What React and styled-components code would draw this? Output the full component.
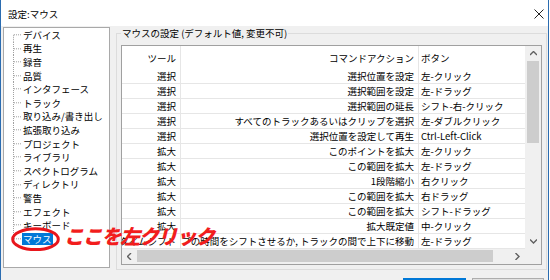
import React from 'react'
import styled, { createGlobalStyle } from 'styled-components'

const UI_FONT = `"Noto Sans CJK JP", "Noto Sans", sans-serif`

const GlobalStyle = createGlobalStyle`
  html, body {
    margin: 0;
    padding: 0;
    background: #fff;
  }
  body {
    font-family: ${UI_FONT};
  }
`

const Window = styled.div`
  position: relative;
  width: 549px;
  height: 280px;
  box-sizing: border-box;
  border-left: 1px solid #2b6cb0;
  border-right: 1px solid #2b6cb0;
  background: #f0f0f0;
  display: flex;
  flex-direction: column;
  overflow: hidden;
  font-family: ${UI_FONT};
  font-size: 9.5px;
  color: #000;
`

const TitleBar = styled.div`
  flex: none;
  height: 26px;
  box-sizing: border-box;
  padding: 2px 4px 0 7px;
  background: #fff;
  display: flex;
  align-items: center;
  justify-content: space-between;
`

const Content = styled.div`
  flex: none;
  height: 243px;
  box-sizing: border-box;
  padding: 1px 0 0 2px;
  display: flex;
  align-items: flex-start;
  gap: 6px;
`

const Tree = styled.ul`
  margin: 0;
  width: 107px;
  height: 241px;
  box-sizing: border-box;
  padding: 0 0 0 9px;
  list-style: none;
  background: #fff;
  border: 1px solid #a9a9a9;
`

const TreeItem = styled.li`
  height: 13.6px;
  display: flex;
  align-items: center;
`

const TreeLabel = styled.span`
  padding: 0 1px;
  line-height: 12px;
  white-space: nowrap;
  background: ${p => (p.$selected ? '#0078d7' : 'transparent')};
  color: ${p => (p.$selected ? '#fff' : '#000')};
`

const GuideSvg = styled.svg`
  flex: none;
  display: block;
`

const Group = styled.fieldset`
  margin: 0;
  min-width: 0;
  width: 431px;
  height: 243px;
  box-sizing: border-box;
  padding: 6px 4px 4px 4px;
  border: 1px solid #dcdcdc;
`

const Legend = styled.legend`
  margin: 0;
  padding: 0 1px;
  line-height: 12px;
  white-space: nowrap;
`

const Table = styled.div`
  width: 421px;
  height: 220px;
  box-sizing: border-box;
  border: 1px solid #a0a0a0;
  background: #fff;
  display: grid;
  grid-template-columns: 403px 16px;
  grid-template-rows: 203px 15px;
`

const Rows = styled.div`
  overflow: hidden;
`

const Row = styled.div`
  display: grid;
  grid-template-columns: 59px 238px 106px;
  height: ${p => (p.$header ? 23 : 15)}px;
  box-sizing: border-box;
  border-bottom: ${p => (p.$header ? 'none' : '1px solid #e6e6e6')};
`

const Cell = styled.div`
  display: flex;
  align-items: center;
  justify-content: ${p => (p.$align === 'left' ? 'flex-start' : 'flex-end')};
  padding: ${p => (p.$align === 'left' ? '0 0 0 2px' : '0 4px 0 0')};
  overflow: hidden;
  white-space: nowrap;
  border-right: ${p => (p.$divider ? '1px solid #e6e6e6' : 'none')};
  line-height: 14px;
`

const CellText = styled.span`
  flex: none;
`

const VScroll = styled.div`
  display: flex;
  flex-direction: column;
  background: #f0f0f0;
`

const HScroll = styled.div`
  display: flex;
  background: #f0f0f0;
`

const ArrowBox = styled.div`
  flex: none;
  width: ${p => (p.$vertical ? 'auto' : '15px')};
  height: ${p => (p.$vertical ? '15px' : 'auto')};
  display: flex;
  align-items: center;
  justify-content: center;
`

const Track = styled.div`
  flex: 1;
  display: flex;
  flex-direction: ${p => (p.$vertical ? 'column' : 'row')};
`

const Thumb = styled.div`
  flex: none;
  background: #cdcdcd;
  width: ${p => (p.$vertical ? '12px' : `${p.$size}px`)};
  height: ${p => (p.$vertical ? `${p.$size}px` : '12px')};
  margin: ${p => (p.$vertical ? '0 0 0 2px' : '1px 0 0 0')};
`

const Corner = styled.div`
  background: #f0f0f0;
`

const Footer = styled.div`
  display: flex;
  justify-content: flex-end;
  gap: 6px;
  padding: 9px 4px 0 0;
`

const Button = styled.button`
  width: ${p => p.$w}px;
  height: 22px;
  box-sizing: border-box;
  font-family: ${UI_FONT};
  font-size: 9.5px;
  background: #e1e1e1;
  border: 1px solid ${p => (p.$primary ? '#0078d7' : '#adadad')};
  box-shadow: ${p => (p.$primary ? 'inset 0 0 0 1px #0078d7' : 'none')};
`

const Ring = styled.svg`
  position: absolute;
  left: 10px;
  top: 227px;
`

const Annotation = styled.div`
  position: absolute;
  left: 63px;
  top: 226px;
  color: #f21d1d;
  font-family: ${UI_FONT};
  font-size: 20px;
  font-weight: 900;
  font-style: italic;
  line-height: 20px;
  letter-spacing: -1.3px;
  white-space: nowrap;
`

const treeItems = [
  'デバイス', '再生', '録音', '品質', 'インタフェース', 'トラック',
  '取り込み/書き出し', '拡張取り込み', 'プロジェクト', 'ライブラリ',
  'スペクトログラム', 'ディレクトリ', '警告', 'エフェクト', 'キーボード', 'マウス',
]

const bindings = [
  ['選択', '選択位置を設定', '左-クリック'],
  ['選択', '選択範囲を設定', '左-ドラッグ'],
  ['選択', '選択範囲の延長', 'シフト-右-クリック'],
  ['選択', 'すべてのトラックあるいはクリップを選択', '左-ダブルクリック'],
  ['選択', '選択位置を設定して再生', 'Ctrl-Left-Click'],
  ['拡大', 'このポイントを拡大', '左-クリック'],
  ['拡大', 'この範囲を拡大', '左-ドラッグ'],
  ['拡大', '1段階縮小', '右クリック'],
  ['拡大', 'この範囲を拡大', '右ドラッグ'],
  ['拡大', 'この範囲を拡大', 'シフト-ドラッグ'],
  ['拡大', '拡大既定値', '中-クリック'],
  ['タイムシフト', 'クリップの時間をシフトさせるか, トラックの間で上下に移動', '左-ドラッグ'],
]

const Guide = ({ first, last }) => (
  <GuideSvg width="9" height="13.6" viewBox="0 0 9 13.6">
    <line x1="0.5" y1={first ? 6.8 : 0} x2="0.5" y2={last ? 6.8 : 13.6}
      stroke="#a0a0a0" strokeDasharray="1 1" />
    <line x1="1" y1="6.8" x2="9" y2="6.8" stroke="#a0a0a0" strokeDasharray="1 1" />
  </GuideSvg>
)

const Chevron = ({ dir }) => {
  const pts = {
    up: '0,4 3.5,0.5 7,4',
    down: '0,0.5 3.5,4 7,0.5',
    left: '4,0 0.5,3.5 4,7',
    right: '0.5,0 4,3.5 0.5,7',
  }[dir]
  const vertical = dir === 'up' || dir === 'down'
  return (
    <svg width={vertical ? 7 : 5} height={vertical ? 5 : 7}>
      <polyline points={pts} fill="none" stroke="#606060" strokeWidth="1.4" />
    </svg>
  )
}

export default function App() {
  return (
    <>
      <GlobalStyle />
      <Window>
        <TitleBar>
          <span>設定:マウス</span>
          <svg width="10" height="10">
            <path d="M0.5 0.5 L9.5 9.5 M9.5 0.5 L0.5 9.5" stroke="#222" strokeWidth="1" />
          </svg>
        </TitleBar>

        <Content>
          <Tree>
            {treeItems.map((t, i) => (
              <TreeItem key={t}>
                <Guide first={i === 0} last={i === treeItems.length - 1} />
                <TreeLabel $selected={t === 'マウス'}>{t}</TreeLabel>
              </TreeItem>
            ))}
          </Tree>

          <Group>
            <Legend>マウスの設定 (デフォルト値, 変更不可)</Legend>
            <Table>
              <Rows>
                <Row $header>
                  <Cell $divider><CellText>ツール</CellText></Cell>
                  <Cell $divider><CellText>コマンドアクション</CellText></Cell>
                  <Cell $align="left"><CellText>ボタン</CellText></Cell>
                </Row>
                {bindings.map(([tool, action, button], i) => (
                  <Row key={i}>
                    <Cell $divider><CellText>{tool}</CellText></Cell>
                    <Cell $divider><CellText>{action}</CellText></Cell>
                    <Cell $align="left"><CellText>{button}</CellText></Cell>
                  </Row>
                ))}
              </Rows>

              <VScroll>
                <ArrowBox $vertical><Chevron dir="up" /></ArrowBox>
                <Track $vertical><Thumb $vertical $size={82} /></Track>
                <ArrowBox $vertical><Chevron dir="down" /></ArrowBox>
              </VScroll>

              <HScroll>
                <ArrowBox><Chevron dir="left" /></ArrowBox>
                <Track><Thumb $size={356} /></Track>
                <ArrowBox><Chevron dir="right" /></ArrowBox>
              </HScroll>

              <Corner />
            </Table>
          </Group>
        </Content>

        <Footer>
          <Button $w={63} $primary>OK</Button>
          <Button $w={72}>キャンセル</Button>
        </Footer>

        <Ring width="50" height="25" viewBox="0 0 50 25">
          <ellipse cx="24.5" cy="12.2" rx="22.8" ry="10.4" fill="none" stroke="#e8161c" strokeWidth="3" />
        </Ring>
        <Annotation>ここを左クリック</Annotation>
      </Window>
    </>
  )
}
